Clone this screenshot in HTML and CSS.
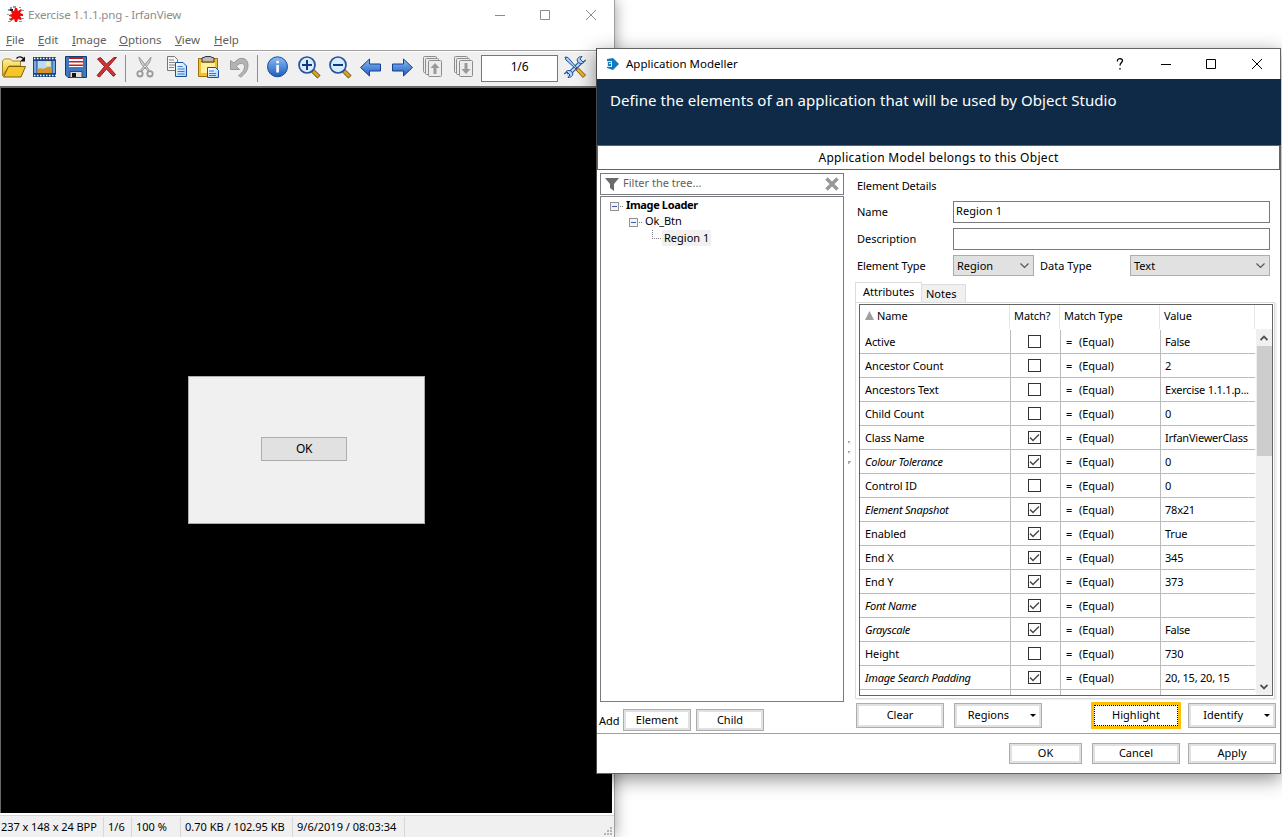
FILE: index.html
```html
<!DOCTYPE html>
<html lang="en">
<head>
<meta charset="utf-8">
<title>Application Modeller</title>
<link rel="stylesheet" href="styles.css">
</head>
<body>
<svg width="0" height="0" class="defs">
  <defs>
    <linearGradient id="gold" x1="0" y1="0" x2="0" y2="1"><stop offset="0" stop-color="#fff2a0"/><stop offset="1" stop-color="#e8b010"/></linearGradient>
    <linearGradient id="blue" x1="0" y1="0" x2="0" y2="1"><stop offset="0" stop-color="#8cbcf4"/><stop offset="1" stop-color="#1c5cc0"/></linearGradient>
    <linearGradient id="page" x1="0" y1="0" x2="1" y2="1"><stop offset="0" stop-color="#ffffff"/><stop offset="1" stop-color="#a8d0f8"/></linearGradient>
  </defs>
</svg>

<main class="desktop">
<section class="viewer">
  <header class="v-title">
    <svg class="v-logo" width="18" height="18" viewBox="0 0 18 18"><path d="M1 3h2v2H1zM3 1h2v2H3zM12 1h2v1h-2zM15 4h2v1h-2zM2 12h2v2H2zM1 15h3v1H1zM12 15h3v1h-3zM6 0h3v2H6zM0 8h2v1H0zM15 12h2v1h-2z" fill="#999"/><path d="M4 5l3 0 1-3 2 0 1 3 3-2 1 1-2 3 3 1 0 2-3 0 2 3-1 1-3-1-1 3-2 0-1-3-3 2-1-1 2-3-3-1 0-1 3-1z" fill="#f80808"/><path d="M3 3h3v2H3z" fill="#222"/></svg>
    <span class="v-name">Exercise 1.1.1.png - IrfanView</span>
    <svg class="v-ctl" width="95" height="12" viewBox="0 0 95 12" fill="none" stroke="#8c8c8c"><path d="M0 6.500h10M45.500 1.500h9v9h-9zM91 1l10 10M101 1l-10 10" /></svg>
  </header>
  <nav class="v-menu"><span class="m1"><u>F</u>ile</span><span class="m2"><u>E</u>dit</span><span class="m3"><u>I</u>mage</span><span class="m4"><u>O</u>ptions</span><span class="m5"><u>V</u>iew</span><span class="m6"><u>H</u>elp</span></nav>
  <div class="v-tools">
    <div class="grp">
      <svg viewBox="0 0 24 24"><path d="M.5 21V6l2-2h6l2 2h8v5H7z" fill="url(#gold)" stroke="#a88420"/><path d="M1.500 22L6.500 11.500H23.500L19 22z" fill="#f4c62c" stroke="#806008"/><path d="M14.500 3.500c2-2.500 5-2 7 0" fill="none" stroke="#111" stroke-width="1.300"/><path d="M23 1.500v5h-5z" fill="#111"/></svg>
      <svg viewBox="0 0 24 24"><path d="M0 2h23v20H0z" fill="#1c4480"/><path d="M1 3.500h22M1 20.500h22" stroke="#fff" stroke-width="1.500" stroke-dasharray="1.500 1.500"/><path d="M1 6h2.500v12H1zM19.500 6H22v12h-2.500z" fill="#78a8e0"/><path d="M4.500 6h14v12h-14z" fill="#b8dcf8"/><path d="M4.500 14c3-2 5 1 8-1s4-1 6-1v6h-14z" fill="#d89428"/><circle cx="15" cy="9" r="2.200" fill="#fff080"/></svg>
      <svg viewBox="0 0 24 24"><path d="M1.500 1.500h21v21H4l-2.500-2.500z" fill="#3f78c0" stroke="#143c74"/><path d="M5 2h14v10H5z" fill="#fff"/><path d="M5 2h14v2H5zM5 6h14v1.500H5zM5 9.500h14V11H5z" fill="#c81824"/><path d="M6 16.500h12v6H6z" fill="#ddd" stroke="#444"/><path d="M8 18h4v4H8z" fill="#111"/></svg>
      <svg viewBox="0 0 24 24"><path d="M2.500 4l3-1.500 6 6.500L19 2.500l2.500 0-8 9 7 8-2 2-7-7.500-7 8L2 20.500l7.500-9z" fill="#cc3438" stroke="#981c20"/></svg>
    </div>
    <i class="sep"></i>
    <div class="grp">
      <svg viewBox="0 0 24 24"><path d="M5 2c0 3 2 7 5 10l4 4 1-1.500zM17 2c0 3-2 7-5 10l-4 4-1-1.500z" fill="#ccc" stroke="#999"/><circle cx="6" cy="18.800" r="2.700" fill="none" stroke="#999" stroke-width="1.800"/><circle cx="16" cy="18.800" r="2.700" fill="none" stroke="#999" stroke-width="1.800"/></svg>
      <svg viewBox="0 0 24 24"><path d="M2.500 1.500h7l3 3v11h-10z" fill="#f4f4f4" stroke="#777"/><path d="M4 5h5M4 7.500h6M4 10h6M4 12.500h5" stroke="#888"/><path d="M10.500 7.500h7.500l3.500 3.500v10.500H10.500z" fill="url(#page)" stroke="#1c50a0"/><path d="M12.500 11.500h5M12.500 14h7M12.500 16.500h7M12.500 19h7" stroke="#3878c8"/></svg>
      <svg viewBox="0 0 24 24"><path d="M2.500 3.500h19v18h-19z" fill="#f5c030" stroke="#9a7010"/><path d="M6 7V3l4-1.500h4L18 3v4z" fill="#bbb" stroke="#333"/><path d="M5 8h14v10H5z" fill="#fff0a0"/><path d="M11.500 12.500h8l3 3v7h-11z" fill="url(#page)" stroke="#1c50a0"/><path d="M13 16h5M13 18.500h7M13 20.500h7" stroke="#3878c8"/></svg>
      <svg viewBox="0 0 24 24"><path d="M3.500 5.500v9h9l-3-3c2-4 8-4 8 0 0 4-3 7-6 9l2 1.500c5-3 7.500-7 7.500-12 0-8-9-9-14-2z" fill="#b4b4b4" stroke="#999"/></svg>
    </div>
    <i class="sep"></i>
    <div class="grp">
      <svg viewBox="0 0 24 24"><circle cx="11.500" cy="11.800" r="10" fill="url(#blue)" stroke="#174c9c"/><path d="M10.300 10h2.600v7.500h-2.600zM10.300 5.800h2.600v2.500h-2.600z" fill="#fff"/></svg>
      <svg viewBox="0 0 24 24"><path d="M15 15l7 7" stroke="#705010" stroke-width="4.500"/><path d="M16 16l5.500 5.500" stroke="#d8a428" stroke-width="2.800"/><circle cx="10" cy="10" r="8" fill="#d8ecff" stroke="#24509c" stroke-width="1.700"/><path d="M5 10h10M10 5v10" stroke="#14387c" stroke-width="2"/></svg>
      <svg viewBox="0 0 24 24"><path d="M15 15l7 7" stroke="#705010" stroke-width="4.500"/><path d="M16 16l5.500 5.500" stroke="#d8a428" stroke-width="2.800"/><circle cx="10" cy="10" r="8" fill="#d8ecff" stroke="#24509c" stroke-width="1.700"/><path d="M5 10h10" stroke="#14387c" stroke-width="2"/></svg>
      <svg viewBox="0 0 24 24"><path d="M1.500 12.500l9-8.500v5h11v7h-11v5z" fill="url(#blue)" stroke="#143f94"/></svg>
      <svg viewBox="0 0 24 24"><path d="M22.500 12.500l-9-8.500v5h-11v7h11v5z" fill="url(#blue)" stroke="#143f94"/></svg>
      <svg viewBox="0 0 24 24"><g fill="#ececec" stroke="#8c8c8c"><rect x="2.500" y="1.500" width="13" height="16" rx="1"/><rect x="4.500" y="3.500" width="13" height="16" rx="1"/><rect x="7.500" y="5.500" width="13" height="16" rx="1"/></g><path d="M14 8l4.500 5h-3v6h-3v-6h-3z" fill="#999"/></svg>
      <svg viewBox="0 0 24 24"><g fill="#ececec" stroke="#8c8c8c"><rect x="2.500" y="1.500" width="13" height="16" rx="1"/><rect x="4.500" y="3.500" width="13" height="16" rx="1"/><rect x="7.500" y="5.500" width="13" height="16" rx="1"/></g><path d="M14 19l4.500-5h-3V8h-3v6h-3z" fill="#999"/></svg>
    </div>
    <span class="counter">1/6</span>
    <svg class="wrench" viewBox="0 0 24 24"><path d="M5 20L18 7" stroke="#244c94" stroke-width="4"/><path d="M4 21L19 6" stroke="#b8dcf8" stroke-width="2"/><path d="M22.500 5l-2.500 2-3-3 2-2.500c-4 0-6 3-4 5.500s6 2 7.500-2zM1.500 19l2.500-2 3 3-2 2.500c4 0 6-3 4-5.500s-6-2-7.500 2z" fill="#b0d4f4" stroke="#244c94"/><path d="M2 2l3 .5L14 13l-1 1L3 5z" fill="#a8d0f4" stroke="#244c94"/><path d="M13 15l2.500-2 7 7-2.500 2.500z" fill="#e8b028" stroke="#80600c"/></svg>
  </div>
  <div class="v-canvas"><div class="picture"><span class="pic-ok">OK</span></div></div>
  <footer class="v-status"><span class="s1">237 x 148 x 24 BPP</span><span class="s2">1/6</span><span class="s3">100 %</span><span class="s4">0.70 KB / 102.95 KB</span><span class="s5">9/6/2019 / 08:03:34</span>
    <svg class="grip" width="10" height="10" fill="#b4b4b4"><path d="M6 0h2v2H6zM3 3h2v2H3zM6 3h2v2H6zM0 6h2v2H0zM3 6h2v2H3zM6 6h2v2H6z"/></svg>
  </footer>
</section>

<section class="dialog">
  <header class="d-title">
    <svg width="14" height="14" viewBox="0 0 14 14"><path d="M1 2l6-1 6 6-6 6-6-2z" fill="#1478bc"/><path d="M1 4h5v6H1z" fill="#cfe8f8"/><path d="M2 5h3v1H3v1h2v2H2z" fill="#1482c8"/></svg>
    <span class="d-name">Application Modeller</span>
    <svg class="d-ctl" width="147" height="12" viewBox="0 0 147 12" fill="none" stroke="#000"><path d="M1.500 3.500V2c1-2 5-1.500 5 .500 0 2-2.500 2-2.500 5M4 10v1.500" stroke-width="1.300"/><path d="M45 6.500h10M90.500 1.500h9v9h-9zM136 1l10 10M146 1l-10 10"/></svg>
  </header>
  <div class="banner">Define the elements of an application that will be used by Object Studio</div>
  <div class="owner"><span>Application Model belongs to this Object</span></div>
  <div class="d-body">
    <div class="left">
      <div class="filter">
        <svg width="14" height="14" viewBox="0 0 14 14"><path d="M0 1h14L9 7v7L5 11V7z" fill="#6b6b6b"/></svg>
        <span>Filter the tree...</span>
        <svg class="clear" width="14" height="14" viewBox="0 0 14 14"><path d="M1.500 1.500l11 11M12.500 1.500l-11 11" stroke="#999" stroke-width="3.500"/></svg>
      </div>
      <div class="tree">
        <div class="node n1"><i class="minus"></i><i class="dots"></i><b>Image Loader</b></div>
        <div class="node n2"><i class="minus"></i><i class="dots"></i><span>Ok_Btn</span></div>
        <div class="node n3"><i class="elbow"></i><span class="picked">Region 1</span></div>
      </div>
      <div class="addrow"><span>Add</span><button>Element</button><button>Child</button></div>
    </div>
    <div class="splitter"><i></i><i></i><i></i></div>
    <div class="right">
      <div class="form">
        <div class="heading">Element Details</div>
        <div class="line"><label class="l-name">Name</label><div class="input">Region 1</div></div>
        <div class="line"><label class="l-desc">Description</label><div class="input"></div></div>
        <div class="line"><label class="l-type">Element Type</label><div class="combo c1">Region<svg width="9" height="6"><path d="M.5 .500l4 4 4-4" fill="none" stroke="#555" stroke-width="1.200"/></svg></div><label class="mid">Data Type</label><div class="combo c2">Text<svg width="9" height="6"><path d="M.5 .500l4 4 4-4" fill="none" stroke="#555" stroke-width="1.200"/></svg></div></div>
      </div>
      <div class="tabs"><span class="tab on">Attributes</span><span class="tab off">Notes</span></div>
      <div class="tabpage">
        <div class="table">
          <div class="thead"><span><svg width="9" height="9"><path d="M4.500 0L9 9H0z" fill="#a0a0a0"/></svg>Name</span><span>Match?</span><span>Match Type</span><span>Value</span></div>
          <div class="tbody">
            <div class="rows" id="rows"></div>
            <div class="scroll"><svg width="8" height="6"><path d="M.5 5l3.500-3.500L7.500 5" fill="none" stroke="#505050" stroke-width="1.800"/></svg><i class="thumb"></i><svg width="8" height="6"><path d="M.5 1l3.500 3.500L7.500 1" fill="none" stroke="#505050" stroke-width="1.800"/></svg></div>
          </div>
        </div>
      </div>
      <div class="actions"><button class="w88">Clear</button><button class="w88 drop">Regions<i></i></button><button class="hot"><span>Highlight</span></button><button class="w88 drop">Identify<i></i></button></div>
    </div>
  </div>
  <footer class="d-foot"><button class="w73">OK</button><button class="w88">Cancel</button><button class="w88">Apply</button></footer>
</section>
</main>
<script src="rows.js"></script>
</body>
</html>
```
FILE: rows.js
```js
// Attribute rows: name, matched, value, italic.
const attributes = [
  ["Active", 0, "False", 0],
  ["Ancestor Count", 0, "2", 0],
  ["Ancestors Text", 0, "Exercise 1.1.1.p...", 0],
  ["Child Count", 0, "0", 0],
  ["Class Name", 1, "IrfanViewerClass", 0],
  ["Colour Tolerance", 1, "0", 1],
  ["Control ID", 0, "0", 0],
  ["Element Snapshot", 1, "78x21", 1],
  ["Enabled", 1, "True", 0],
  ["End X", 1, "345", 0],
  ["End Y", 1, "373", 0],
  ["Font Name", 1, "", 1],
  ["Grayscale", 1, "False", 1],
  ["Height", 0, "730", 0],
  ["Image Search Padding", 1, "20, 15, 20, 15", 1]
];
const tick = '<svg width="11" height="11"><path d="M1 5.500l3 3L10 2.500" fill="none" stroke="#444" stroke-width="1.300"/></svg>';
document.getElementById("rows").innerHTML = attributes.map(([name, on, value, it]) =>
  `<div class="row"><span class="${it ? "it" : ""}">${name}</span><span class="mk"><i class="box">${on ? tick : ""}</i></span><span class="eq"><em>=</em>(Equal)</span><span class="val">${value}</span></div>`
).join("") + '<div class="row"><span></span><span></span><span></span><span></span></div>';
```
FILE: styles.css
```css
* { box-sizing: border-box; }
body { margin: 0; font-family: "Noto Sans", "Open Sans", sans-serif; font-size: 11px; color: #000; background: #fff; }
.defs { position: absolute; }
svg { display: block; flex: none; }
i { display: block; flex: none; }
.desktop { position: relative; width: 1282px; height: 837px; overflow: hidden; background: #fff; }
span, label, b { white-space: nowrap; }

/* Image viewer window */
.viewer { position: absolute; left: 0; top: 0; width: 615px; height: 837px; display: flex; flex-direction: column; background: #fff; border-right: 1px solid #a0a0a0; box-shadow: 0 0 14px rgba(0,0,0,.4); }
.v-title { height: 29px; flex: none; display: flex; align-items: center; padding-left: 7px; color: #8c8c8c; }
.v-name { margin-left: 3px; font-size: 11.500px; letter-spacing: -.16px; margin-bottom: 1px; }
.v-ctl { margin-left: auto; margin-right: 24px; overflow: visible; }
.v-menu { height: 21px; flex: none; display: flex; align-items: center; padding-left: 6px; color: #606060; font-size: 11.500px; letter-spacing: -.05px; }
.v-menu span { height: 18px; line-height: 18px; }
.m1 { width: 32px; } .m2 { width: 34px; } .m3 { width: 47px; } .m4 { width: 56px; } .m5 { width: 39px; }
.v-tools { height: 38px; flex: none; border-top: 1px solid #a0a0a0; border-bottom: 2px solid #696969; background: #f0f0f0; box-shadow: inset 0 1px #fff; display: flex; align-items: flex-start; padding: 4px 0 0 2px; }
.grp { display: flex; gap: 7px; }
.grp svg, .wrench { width: 24px; height: 24px; }
.sep { width: 1px; height: 27px; margin: 0 8px 0 6px; background: #8c8c8c; }
.counter { width: 77px; height: 27px; margin-left: 5px; border: 1px solid #777; background: #fff; text-align: center; font-size: 12px; letter-spacing: -.2px; line-height: 21px; }
.wrench { margin-left: 5px; }
.v-canvas { height: 725px; flex: none; background: #000; border-left: 1px solid #696969; margin-right: 2px; padding: 288px 0 0 187px; }
.picture { width: 237px; height: 148px; border: 1px solid #adadad; background: #f0f0f0; padding: 60px 0 0 72px; }
.pic-ok { display: block; width: 86px; height: 24px; border: 1px solid #adadad; background: #e1e1e1; text-align: center; font-size: 12px; line-height: 22px; letter-spacing: -.4px; }
.v-status { flex: 1; margin-top: 2px; border-top: 1px solid #d7d7d7; background: #f0f0f0; display: flex; align-items: flex-end; font-size: 11px; }
.v-status span { height: 20px; line-height: 20px; padding-left: 4px; border-right: 1px solid #d7d7d7; }
.v-status .s1 { width: 104px; padding-left: 1px; letter-spacing: -.05px; } .s2 { width: 28px; } .s3 { width: 49px; } .s4 { width: 112px; } .s5 { width: 112px; }
.grip { margin-left: auto; }

/* Modeller dialog */
.dialog { position: absolute; left: 596px; top: 48px; width: 685px; height: 726px; border: 1px solid #646464; border-left-color: #484848; background: #fff; box-shadow: 0 5px 18px rgba(0,0,0,.45); display: flex; flex-direction: column; }
.d-title { height: 30px; flex: none; display: flex; align-items: center; padding-left: 9px; padding-bottom: 1px; }
.d-name { margin-left: 6px; font-size: 11.500px; }
.d-ctl { margin-left: auto; margin-right: 17px; }
.banner { height: 66px; flex: none; margin-right: -1px; background: #0e2a47; color: #fff; padding: 11px 0 0 13px; font-size: 15px; letter-spacing: .06px; line-height: 21px; white-space: nowrap; }
.owner { height: 25px; flex: none; border: 1px solid #646464; text-align: center; line-height: 23px; font-size: 12px; letter-spacing: .3px; }
.d-body { height: 564px; flex: none; display: flex; border-bottom: 1px solid #a0a0a0; padding-left: 1px; }
.left { width: 247px; padding: 3px 0 0 2px; }
.filter { width: 244px; height: 22px; border: 1px solid #7a7a82; display: flex; align-items: center; padding: 0 4px; color: #606060; }
.filter span { margin-left: 4px; line-height: 18px; margin-bottom: 2px; }
.clear { margin-left: auto; }
.tree { width: 244px; height: 506px; margin-top: 1px; border: 1px solid #7a7a82; padding-top: 1px; }
.node { height: 16px; display: flex; align-items: center; }
.node b { line-height: 16px; margin-bottom: 2px; letter-spacing: -.35px; }
.n2 span { line-height: 16px; margin-bottom: 2px; letter-spacing: -.1px; }
.n1 { padding-left: 9px; } .n2 { padding-left: 28px; } .n3 { padding-left: 51px; }
.minus { width: 9px; height: 9px; border: 1px solid #919191; background: linear-gradient(#4058b0, #4058b0) center / 5px 1px no-repeat #f4f4f4; }
.dots { width: 3px; border-top: 1px dotted #808080; margin: 0 3px 0 1px; }
.elbow { width: 9px; height: 9px; border: dotted #808080; border-width: 0 0 1px 1px; margin-bottom: 8px; }
.picked { background: #f0f0f0; padding: 0 2px; margin-left: 1px; height: 16px; line-height: 16px; }
.addrow { display: flex; align-items: center; margin: 7px 0 0 -1px; }
.addrow span { width: 24px; padding-top: 1px; }
.addrow button { width: 68px; height: 22px; margin-right: 5px; }
button { font: inherit; color: #000; background: #fff; border: 1px solid #adadad; box-shadow: inset 0 0 0 2px #e1e1e1; padding: 0 0 2px; flex: none; white-space: nowrap; }
.splitter { width: 8px; padding: 271px 0 0 3px; }
.splitter i { width: 3px; height: 3px; margin-bottom: 7px; background: linear-gradient(135deg, #a8a8a8 50%, #eee 50%); }
.right { width: 422px; padding-left: 2px; }
.form { height: 112px; padding-left: 2px; }
.heading { height: 31px; line-height: 32px; letter-spacing: -.08px; }
.line { height: 27px; display: flex; align-items: flex-start; }
.line label { width: 96px; line-height: 22px; }
.l-type { letter-spacing: -.1px; }
.input { width: 317px; height: 22px; border: 1px solid #7a7a7a; padding-left: 2px; line-height: 18px; letter-spacing: .1px; }
.combo { height: 21px; border: 1px solid #adadad; background: #e1e1e1; display: flex; align-items: center; justify-content: space-between; padding: 0 4px 0 3px; }
.c1 { width: 81px; } .c2 { width: 140px; }
.line .mid { width: 96px; padding-left: 6px; }
.tabs { height: 20px; display: flex; align-items: flex-end; }
.tab.on { height: 20px; width: 67px; border: 1px solid #dcdcdc; border-bottom: 0; padding-left: 7px; line-height: 17px; }
.tab.off { height: 18px; width: 44px; border: 1px solid #dcdcdc; border-width: 1px 1px 0 0; background: #f0f0f0; padding-left: 4px; line-height: 17px; }
.tabpage { width: 420px; height: 397px; border: 1px solid #dcdcdc; padding: 1px 0 0 3px; box-shadow: 2px 1px #f0f0f0; }
.table { width: 414px; height: 392px; border: 1px solid #646464; overflow: hidden; }
.thead { height: 24px; display: flex; line-height: 22px; letter-spacing: -.1px; }
.thead span { border-right: 1px solid #e5e5e5; padding-left: 4px; width: 100px; }
.thead span:first-child { width: 150px; padding-left: 5px; display: flex; }
.thead span:first-child svg { margin: 6px 3px 0 0; }
.thead span:nth-child(2) { width: 50px; }
.thead span:nth-child(4) { width: 95px; }
.tbody { display: flex; height: 366px; overflow: hidden; }
.rows { width: 395px; padding-top: 1px; letter-spacing: -.1px; }
.row { height: 24px; display: flex; line-height: 23px; border-bottom: 1px solid #bcbcbc; }
.row > span { width: 95px; padding-left: 4px; border-right: 1px solid #bcbcbc; }
.row > span:first-child { width: 151px; padding-left: 5px; }
.row > span:nth-child(2) { width: 50px; }
.row > span:nth-child(3) { width: 100px; padding-left: 5px; }
.row > span:last-child { border: 0; width: 94px; letter-spacing: -.22px; }
.row .it { font-style: italic; letter-spacing: -.25px; }
.row .mk { padding: 5px 0 0 17px; }
.box { width: 13px; height: 13px; border: 1px solid #333; }
.eq em { font-style: normal; display: inline-block; width: 13px; }
.scroll { width: 16px; background: #f0f0f0; display: flex; flex-direction: column; align-items: center; padding: 6px 0 5px; margin-left: 1px; }
.thumb { width: 15px; height: 110px; background: #cdcdcd; margin: 5px 0 auto; }
.actions { display: flex; align-items: center; padding: 1px 0 0 1px; height: 32px; }
.w88 { width: 88px; height: 25px; }
.w73 { width: 73px; }
.actions .drop:nth-child(2) { margin-left: 10px; }
.actions .drop:nth-child(4) { margin-left: 7px; }
.drop { display: flex; align-items: center; justify-content: flex-end; padding-right: 5px; }
.drop i { border: solid transparent; border-width: 3px 3px 0; border-top-color: #000; margin: 2px 0 0 21px; }
.hot { width: 90px; height: 27px; margin-left: 49px; border: 3px solid #ffc000; box-shadow: none; padding: 0; }
.hot span { display: block; height: 21px; line-height: 18px; border: 1px dotted #000; }
.d-foot { display: flex; padding: 9px 0 0 412px; }
.d-foot button { height: 21px; }
.d-foot button + button { margin-left: 10px; }
.d-foot button + button + button { margin-left: 8px; }
```
